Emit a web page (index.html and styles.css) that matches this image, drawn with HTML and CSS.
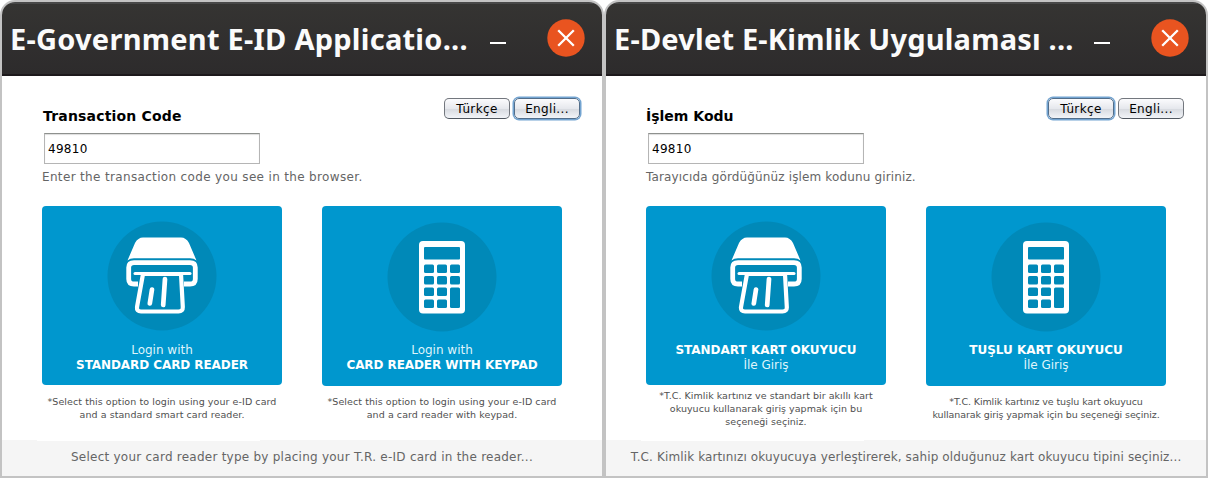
FILE: index.html
```
<!DOCTYPE html>
<html lang="en">
<head>
<meta charset="utf-8">
<title>E-ID Application</title>
<link rel="stylesheet" href="styles.css">
</head>
<body>
<svg class="defs" width="0" height="0">
  <symbol id="close" viewBox="0 0 38 38"><circle cx="19" cy="19" r="18.7" fill="#e95420"/><path d="M11.2 11.2 26.8 26.8M26.8 11.2 11.2 26.8" stroke="#fff" stroke-width="2.3"/></symbol>
  <symbol id="reader" viewBox="0 0 110 110">
    <circle cx="55" cy="55" r="54.5" fill="#0089b8"/>
    <path d="M20.500 39.500 28 22Q31 16.500 36 16.500H74Q79 16.500 82 22L89.500 39.500Q87 37.200 83 37.200H27Q23 37.200 20.500 39.500Z" fill="#fff"/>
    <path d="M31 63H27Q21.700 63 21.700 58V46.500Q21.700 41.600 27 41.600H83Q88.300 41.600 88.300 46.500V58Q88.300 63 83 63H77" fill="none" stroke="#fff" stroke-width="4.800"/>
    <path d="M28 52.500H83" stroke="#fff" stroke-width="3" stroke-linecap="round"/>
    <path d="M36 53 30 86Q29.500 90.500 34 90.500H71.500Q76 90.500 75.800 86L74 53Z" fill="#0089b8" stroke="#fff" stroke-width="4.200"/>
    <path d="M45 68.500 42.800 82.500M58 58 56.200 84" stroke="#fff" stroke-width="4.700" stroke-linecap="round"/>
  </symbol>
  <symbol id="keypad" viewBox="0 0 110 110">
    <circle cx="55" cy="55" r="54.500" fill="#0089b8"/>
    <rect x="32" y="19" width="46" height="72.500" rx="4" fill="#fff"/>
    <g fill="#0089b8">
      <rect x="37" y="25" width="36" height="12.500" rx="1"/>
      <rect x="37" y="42.500" width="10" height="8.500" rx="1.500"/><rect x="50" y="42.500" width="10" height="8.500" rx="1.500"/><rect x="63" y="42.500" width="10" height="8.500" rx="1.500"/>
      <rect x="37" y="54" width="10" height="8.500" rx="1.500"/><rect x="50" y="54" width="10" height="8.500" rx="1.500"/><rect x="63" y="54" width="10" height="8.500" rx="1.500"/>
      <rect x="37" y="65.500" width="10" height="8.500" rx="1.500"/><rect x="50" y="65.500" width="10" height="8.500" rx="1.500"/><rect x="63" y="65.500" width="10" height="20.500" rx="1.500"/>
      <rect x="37" y="77.500" width="10" height="8.500" rx="1.500"/><rect x="50" y="77.500" width="10" height="8.500" rx="1.500"/>
    </g>
  </symbol>
</svg>
<main class="windows">
  <section class="window english">
    <header class="titlebar">
      <h1 class="title">E-Government E-ID Applicatio...</h1>
      <span class="minimize"></span>
      <svg class="close"><use href="#close"/></svg>
    </header>
    <div class="content">
      <div class="top">
        <div class="code">
          <label class="label" for="code-en">Transaction Code</label>
          <input class="field" id="code-en" value="49810">
          <p class="help">Enter the transaction code you see in the browser.</p>
        </div>
        <div class="langs"><button class="lang">Türkçe</button><button class="lang active">Engli...</button></div>
      </div>
      <div class="options">
        <div class="option">
          <div class="card standard"><svg class="icon"><use href="#reader"/></svg><span>Login with</span><strong>STANDARD CARD READER</strong></div>
          <p class="note">*Select this option to login using your e-ID card<br>and a standard smart card reader.</p>
        </div>
        <div class="option">
          <div class="card"><svg class="icon"><use href="#keypad"/></svg><span>Login with</span><strong>CARD READER WITH KEYPAD</strong></div>
          <p class="note">*Select this option to login using your e-ID card<br>and a card reader with keypad.</p>
        </div>
      </div>
    </div>
    <footer class="status">Select your card reader type by placing your T.R. e-ID card in the reader...</footer>
  </section>
  <section class="window turkish" lang="tr">
    <header class="titlebar">
      <h1 class="title">E-Devlet E-Kimlik Uygulaması ...</h1>
      <span class="minimize"></span>
      <svg class="close"><use href="#close"/></svg>
    </header>
    <div class="content">
      <div class="top">
        <div class="code">
          <label class="label" for="code-tr">İşlem Kodu</label>
          <input class="field" id="code-tr" value="49810">
          <p class="help">Tarayıcıda gördüğünüz işlem kodunu giriniz.</p>
        </div>
        <div class="langs"><button class="lang active">Türkçe</button><button class="lang">Engli...</button></div>
      </div>
      <div class="options">
        <div class="option">
          <div class="card standard"><svg class="icon"><use href="#reader"/></svg><strong>STANDART KART OKUYUCU</strong><span>İle Giriş</span></div>
          <p class="note three-lines">*T.C. Kimlik kartınız ve standart bir akıllı kart<br>okuyucu kullanarak giriş yapmak için bu<br>seçeneği seçiniz.</p>
        </div>
        <div class="option">
          <div class="card"><svg class="icon"><use href="#keypad"/></svg><strong>TUŞLU KART OKUYUCU</strong><span>İle Giriş</span></div>
          <p class="note">*T.C. Kimlik kartınız ve tuşlu kart okuyucu<br>kullanarak giriş yapmak için bu seçeneği seçiniz.</p>
        </div>
      </div>
    </div>
    <footer class="status">T.C. Kimlik kartınızı okuyucuya yerleştirerek, sahip olduğunuz kart okuyucu tipini seçiniz...</footer>
  </section>
</main>
</body>
</html>
```
FILE: styles.css
```
* { box-sizing: border-box; }
body { margin: 0; background: #fff; font-family: "DejaVu Sans", sans-serif; }
.defs { position: absolute; }
.windows { display: grid; grid-template-columns: 604px 604px; height: 478px; }
.window { display: flex; flex-direction: column; height: 478px; border: 2px solid #c3c3c3; border-radius: 15px 15px 0 0; overflow: hidden; background: #fff; }
.titlebar { display: flex; align-items: center; flex: none; height: 74px; padding: 0 17px 2px 8px; background: linear-gradient(#353432, #2d2b2c); border-top: 2px solid #484848; border-bottom: 2px solid #1d191c; }
.title { flex: none; width: 480px; margin: 0; padding-top: 2px; font: bold 29px/40px "Noto Sans", sans-serif; letter-spacing: .25px; color: #fbfbfb; white-space: nowrap; }
.turkish .title { letter-spacing: .2px; }
.minimize { width: 16px; height: 2px; margin-top: 10px; background: #fff; }
.close { width: 38px; height: 38px; margin-left: auto; }
.content { height: 364px; padding: 20px 22px 0 40px; }
.top { display: flex; justify-content: space-between; height: 110px; }
.code { display: flex; flex-direction: column; }
.label { margin-top: 10px; height: 27px; font-size: 14px; line-height: 20px; font-weight: bold; color: #000; }
.english .label { padding-left: 1px; letter-spacing: .18px; }
.field { width: 216px; height: 31px; margin-left: 2px; padding: 0 3px; border: 1px solid #b5b5b5; border-top-color: #8e918e; border-radius: 0; box-shadow: inset 0 1px 1px #ddd; outline: 0; font: 12px "DejaVu Sans", sans-serif; letter-spacing: .3px; color: #000; }
.help { margin: 5px 0 0; font-size: 12px; line-height: 16px; letter-spacing: .14px; color: #656565; white-space: nowrap; }
.english .help { letter-spacing: .34px; }
.langs { display: flex; gap: 4px; padding-top: 2px; }
.lang { width: 66px; height: 21px; padding: 0; border: 1px solid #73777e; border-bottom-color: #505760; border-radius: 5px; background: linear-gradient(#fbfbfd, #e6e8ed 50%, #d6d9df 51%, #f2f4f8); font: 12px "DejaVu Sans", sans-serif; letter-spacing: .35px; color: #000; }
.active { border-color: #526e8b; box-shadow: 0 0 0 1.500px #73a4d1; }
.options { display: flex; gap: 40px; }
.option { display: flex; flex-direction: column; width: 240px; height: 234px; }
.card { display: flex; flex: none; flex-direction: column; align-items: center; height: 180px; padding-top: 16px; border-radius: 4px; background: #0097ce; color: #fff; font-size: 12px; line-height: 15px; white-space: nowrap; }
.icon { width: 110px; height: 110px; margin-bottom: 11px; }
.standard { height: 179px; padding-top: 15px; }
.standard .icon { margin-bottom: 12px; }
.card span { color: #dff4fb; }
.english .card strong { letter-spacing: -.08px; }
.note { margin: 9px 0 0; text-align: center; font-size: 9.500px; line-height: 13px; letter-spacing: .07px; color: #505050; white-space: nowrap; }
.standard + .note { margin-top: 10px; }
.turkish .note { letter-spacing: -.1px; }
.turkish .three-lines { margin-top: 4px; letter-spacing: .03px; }
.status { height: 36px; flex: none; background: linear-gradient(#fff, #fff) 35px 0 / 223px 1px no-repeat #f5f5f5; text-align: center; font-size: 12px; line-height: 34px; letter-spacing: .12px; color: #656565; white-space: nowrap; }
.english .status { letter-spacing: .24px; }
```
